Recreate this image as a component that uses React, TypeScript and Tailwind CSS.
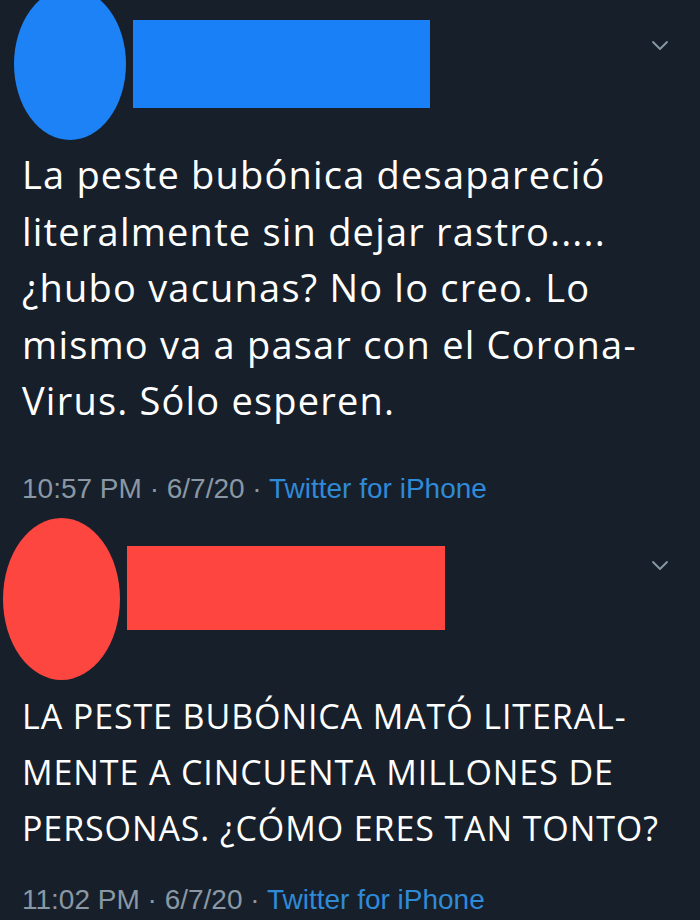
function Chevron() {
  return (
    <svg className="w-[20px] h-[12px]" viewBox="0 0 20 12" fill="none" stroke="#8899a6" strokeWidth="1.8" strokeLinecap="round" strokeLinejoin="round">
      <path d="M3 2l7 7 7-7" />
    </svg>
  );
}

function Footer({ time }: { time: string }) {
  return (
    <div className="pl-[22px] text-[28px] leading-none font-['Liberation_Sans',Arial,sans-serif] text-[#8a98a5]">
      {time} · 6/7/20 · <span className="text-[#2f8ad8]">Twitter for iPhone</span>
    </div>
  );
}

export default function App() {
  return (
    <div className="w-[700px] h-[920px] bg-[#17202a] overflow-hidden">
      {/* first tweet */}
      <div className="flex items-start -mt-[12px]">
        <div className="ml-[14px] w-[112px] h-[152px] rounded-[50%] bg-[#1c82f6] shrink-0" />
        <div className="ml-[7px] mt-[32px] w-[297px] h-[88px] bg-[#1a80f7]" />
        <div className="ml-auto mr-[30px] mt-[52px]">
          <Chevron />
        </div>
      </div>
      <div className="pl-[22px] pt-[6px] text-white text-[38px] leading-[56.5px] font-['Open_Sans',sans-serif] tracking-[1.2px]">
        <p>La peste bubónica desapareció</p>
        <p>literalmente sin dejar rastro.....</p>
        <p>¿hubo vacunas? No lo creo. Lo</p>
        <p>mismo va a pasar con el Corona-</p>
        <p>Virus. Sólo esperen.</p>
      </div>
      <div className="mt-[46px]">
        <Footer time="10:57 PM" />
      </div>

      {/* second tweet */}
      <div className="flex items-start mt-[15px]">
        <div className="ml-[3px] w-[117px] h-[162px] rounded-[50%] bg-[#fd4640] shrink-0" />
        <div className="ml-[7px] mt-[28px] w-[318px] h-[84px] bg-[#fe4540]" />
        <div className="ml-auto mr-[30px] mt-[42px]">
          <Chevron />
        </div>
      </div>
      <div className="pl-[22px] pt-[8px] text-white text-[34px] leading-[56px] font-['Open_Sans',sans-serif] tracking-[0.9px]">
        <p>LA PESTE BUBÓNICA MATÓ LITERAL-</p>
        <p>MENTE A CINCUENTA MILLONES DE</p>
        <p>PERSONAS. ¿CÓMO ERES TAN TONTO?</p>
      </div>
      <div className="mt-[30px]">
        <Footer time="11:02 PM" />
      </div>
    </div>
  );
}
